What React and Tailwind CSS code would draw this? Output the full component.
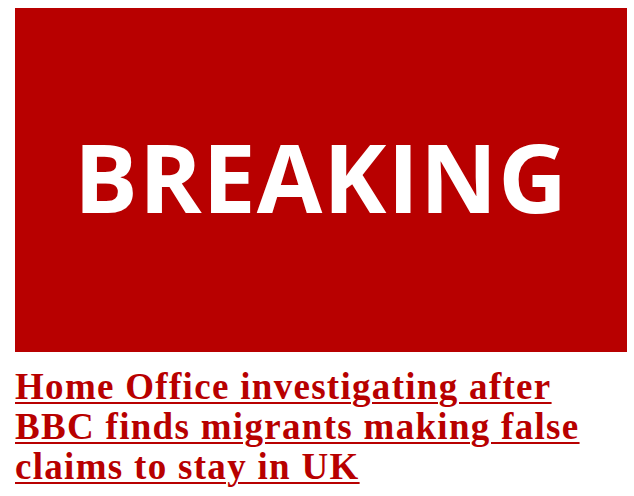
export default function App() {
    return (
        <div className="w-[634px] h-[496px] bg-white px-[15px] pt-2 overflow-hidden">
            <div className="w-[612px] h-[344px] bg-[#b80000] flex items-center justify-center">
                <span className="text-white font-bold text-[95px] leading-none tracking-[1px] pb-[8px]" style={{ fontFamily: '"Open Sans", sans-serif' }}>
                    BREAKING
                </span>
            </div>
            <a
                href="#"
                className="block mt-[15px] text-[#b80000] font-bold text-[37px] leading-[40px] tracking-[1.3px] underline decoration-2 underline-offset-[3px]"
                style={{ fontFamily: '"Liberation Serif", serif' }}
            >
                Home Office investigating after BBC finds migrants making false claims to stay in UK
            </a>
        </div>
    );
}
